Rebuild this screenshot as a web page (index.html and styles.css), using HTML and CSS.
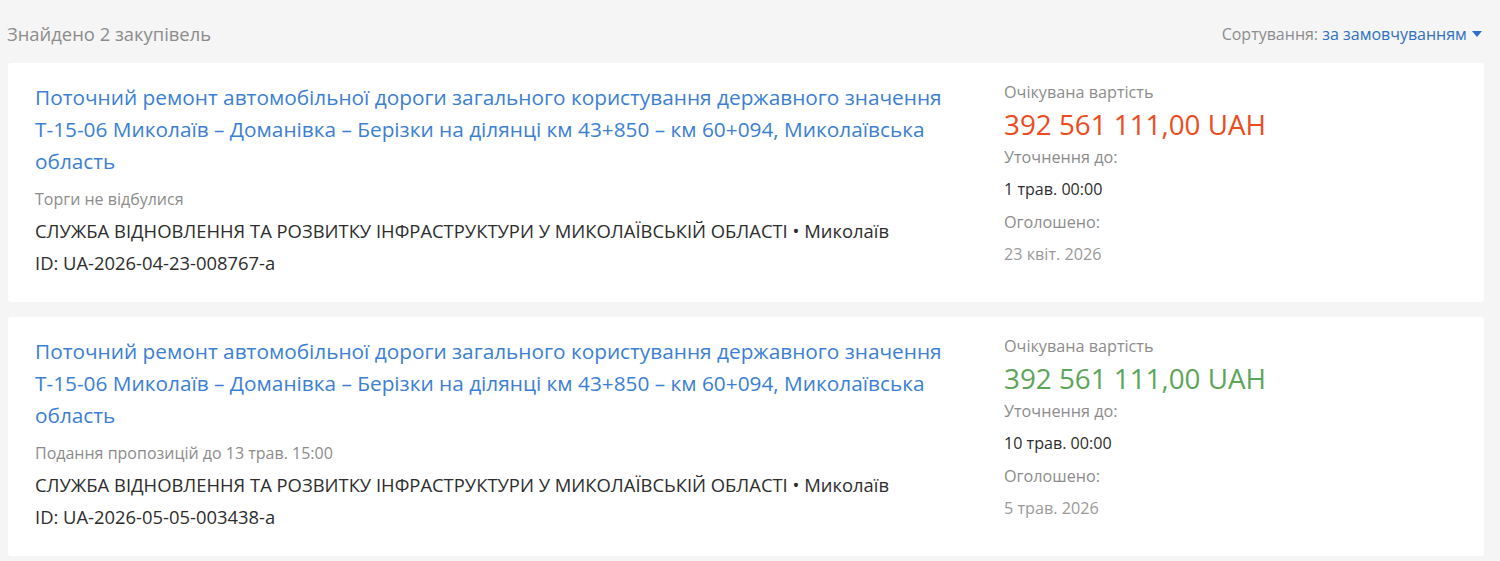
FILE: index.html
```html
<!DOCTYPE html>
<html lang="uk">
<head>
  <meta charset="UTF-8" />
  <meta name="viewport" content="width=device-width, initial-scale=1" />
  <title>Закупівлі</title>
  <link rel="stylesheet" href="styles.css">
</head>
<body>

  <div class="results">
    <div class="results-header">
      <span class="found">Знайдено 2 закупівель</span>
      <span class="sort">Сортування: <a href="#" class="sort-link">за замовчуванням <span class="caret"></span></a></span>
    </div>

    <div class="tender">
      <div class="tender-main">
        <a href="#" class="tender-title">Поточний ремонт автомобільної дороги загального користування державного значення Т-15-06 Миколаїв – Доманівка – Берізки на ділянці км 43+850 – км 60+094, Миколаївська область</a>
        <p class="tender-status">Торги не відбулися</p>
        <p class="tender-org">СЛУЖБА ВІДНОВЛЕННЯ ТА РОЗВИТКУ ІНФРАСТРУКТУРИ У МИКОЛАЇВСЬКІЙ ОБЛАСТІ • Миколаїв</p>
        <p class="tender-id">ID: UA-2026-04-23-008767-a</p>
      </div>
      <div class="tender-side">
        <p class="side-label">Очікувана вартість</p>
        <p class="price price-red">392 561 111,00 UAH</p>
        <p class="side-label">Уточнення до:</p>
        <p class="side-value">1 трав. 00:00</p>
        <p class="side-label">Оголошено:</p>
        <p class="side-date">23 квіт. 2026</p>
      </div>
    </div>

    <div class="tender">
      <div class="tender-main">
        <a href="#" class="tender-title">Поточний ремонт автомобільної дороги загального користування державного значення Т-15-06 Миколаїв – Доманівка – Берізки на ділянці км 43+850 – км 60+094, Миколаївська область</a>
        <p class="tender-status">Подання пропозицій до 13 трав. 15:00</p>
        <p class="tender-org">СЛУЖБА ВІДНОВЛЕННЯ ТА РОЗВИТКУ ІНФРАСТРУКТУРИ У МИКОЛАЇВСЬКІЙ ОБЛАСТІ • Миколаїв</p>
        <p class="tender-id">ID: UA-2026-05-05-003438-a</p>
      </div>
      <div class="tender-side">
        <p class="side-label">Очікувана вартість</p>
        <p class="price price-green">392 561 111,00 UAH</p>
        <p class="side-label">Уточнення до:</p>
        <p class="side-value">10 трав. 00:00</p>
        <p class="side-label">Оголошено:</p>
        <p class="side-date">5 трав. 2026</p>
      </div>
    </div>
  </div>

</body>
</html>
```

FILE: styles.css
```css
body {
  margin: 0;
  padding: 0;
  background-color: #f5f5f6;
  color: #2d2d2d;
  font-family: "Open Sans", Arial, sans-serif;
}
.results {
  padding: 0 16px 0 8px;
}
.results-header {
  display: flex;
  justify-content: space-between;
  align-items: center;
  height: 63px;
  padding-top: 4px;
  box-sizing: border-box;
}
.found {
  margin-left: -1px;
  font-size: 18.4px;
  color: #8c8c8c;
}
.sort {
  font-size: 16px;
  color: #8c8c8c;
  padding-right: 2px;
}
.sort-link {
  color: #2e70c2;
  text-decoration: none;
}
.caret {
  display: inline-block;
  width: 0;
  height: 0;
  margin-left: 1px;
  vertical-align: 3px;
  border-left: 5.5px solid transparent;
  border-right: 5.5px solid transparent;
  border-top: 6px solid #2e70c2;
}
.tender {
  display: flex;
  background: #fff;
  border-radius: 3px;
  padding: 18px 27px 18px 27px;
  margin-bottom: 15px;
  height: 239px;
  box-sizing: border-box;
}
.tender p {
  margin: 0;
}
.tender-main {
  width: 940px;
}
.tender-title {
  display: block;
  font-size: 20.8px;
  line-height: 32px;
  color: #3b80d4;
  text-decoration: none;
  margin-bottom: 6px;
}
.tender-status {
  font-size: 16px;
  line-height: 32px;
  color: #8c8c8c;
}
.tender-org,
.tender-id {
  font-size: 18.4px;
  line-height: 32px;
  color: #2d2d2d;
}
.tender-side {
  margin-left: 29px;
  margin-top: -5px;
}
.side-label {
  font-size: 16.2px;
  line-height: 32.4px;
  color: #8c8c8c;
}
.price {
  font-size: 27.8px;
  line-height: 32.4px;
}
.price-red {
  color: #ee4b21;
}
.price-green {
  color: #5ca65a;
}
.side-value {
  font-size: 16.1px;
  line-height: 32.4px;
  color: #2d2d2d;
}
.side-date {
  font-size: 16.2px;
  line-height: 32.4px;
  color: #9a9a9a;
}
```
